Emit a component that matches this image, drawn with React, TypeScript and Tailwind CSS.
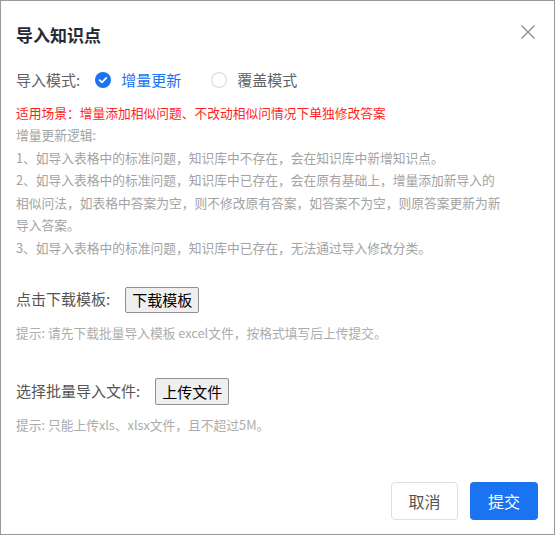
import { useState } from "react";

const LOGIC_LINES = [
  "增量更新逻辑:",
  "1、如导入表格中的标准问题，知识库中不存在，会在知识库中新增知识点。",
  "2、如导入表格中的标准问题，知识库中已存在，会在原有基础上，增量添加新导入的",
  "相似问法，如表格中答案为空，则不修改原有答案，如答案不为空，则原答案更新为新",
  "导入答案。",
  "3、如导入表格中的标准问题，知识库中已存在，无法通过导入修改分类。",
];

function CheckedRadio() {
  return (
    <svg width="16" height="16" viewBox="0 0 16 16">
      <circle cx="8" cy="8" r="8" fill="#1a73f0" />
      <path d="M4.6 8.2 L7 10.4 L11.3 5.9" fill="none" stroke="#fff" strokeWidth="1.8" strokeLinecap="round" strokeLinejoin="round" />
    </svg>
  );
}

function EmptyRadio() {
  return (
    <svg width="16" height="16" viewBox="0 0 16 16">
      <circle cx="8" cy="8" r="7.4" fill="#fff" stroke="#dcdee3" strokeWidth="1.2" />
    </svg>
  );
}

export default function App() {
  const [mode, setMode] = useState<"incr" | "cover">("incr");

  return (
    <div className="w-[555px] h-[535px] border border-[#9a9a9a] bg-white relative font-['Noto_Sans_CJK_SC',sans-serif] pt-[22px] px-[15px]">
      <button className="absolute top-[24px] right-[19px] w-[14px] h-[14px] flex items-center justify-center">
        <svg width="14" height="14" viewBox="0 0 14 14">
          <path d="M1 1 L13 13 M13 1 L1 13" stroke="#8a8e96" strokeWidth="1.4" strokeLinecap="round" />
        </svg>
      </button>

      <h1 className="text-[17px] leading-[24px] font-bold text-[#262a35]">导入知识点</h1>

      <div className="mt-[21px] h-[24px] flex items-center text-[15px] leading-[24px]">
        <span className="text-[#5f6167]">导入模式:</span>
        <label className="ml-[15px] flex items-center cursor-pointer" onClick={() => setMode("incr")}>
          {mode === "incr" ? <CheckedRadio /> : <EmptyRadio />}
          <span className={mode === "incr" ? "ml-[10px] text-[#1a73f0]" : "ml-[10px] text-[#606266]"}>增量更新</span>
        </label>
        <label className="ml-[30px] flex items-center cursor-pointer" onClick={() => setMode("cover")}>
          {mode === "cover" ? <CheckedRadio /> : <EmptyRadio />}
          <span className={mode === "cover" ? "ml-[10px] text-[#1a73f0]" : "ml-[10px] text-[#606266]"}>覆盖模式</span>
        </label>
      </div>

      <p className="mt-[10px] text-[12.75px] leading-[22px] text-[#ff1f1f] whitespace-nowrap">
        适用场景：增量添加相似问题、不改动相似问情况下单独修改答案
      </p>
      <div className="text-[12.75px] leading-[22.6px] text-[#a3a3a3]">
        {LOGIC_LINES.map((line) => (
          <p key={line} className="whitespace-nowrap">{line}</p>
        ))}
      </div>

      <div className="mt-[27px] flex items-center h-[26px]">
        <span className="text-[15px] text-[#555]">点击下载模板:</span>
        <button className="ml-[15px] h-[26px] px-[6px] bg-[#efefef] border border-[#8f8f8f] rounded-[2px] text-[15px] leading-[24px] text-black">
          下载模板
        </button>
      </div>
      <p className="mt-[10px] text-[12.75px] leading-[20px] text-[#acacac] whitespace-nowrap">
        提示: 请先下载批量导入模板 excel文件，按格式填写后上传提交。
      </p>

      <div className="mt-[35px] flex items-center h-[27px]">
        <span className="text-[15px] text-[#555]">选择批量导入文件:</span>
        <button className="ml-[15px] h-[27px] px-[6px] bg-[#efefef] border border-[#8f8f8f] rounded-[2px] text-[15px] leading-[25px] text-black">
          上传文件
        </button>
      </div>
      <p className="mt-[10px] text-[12.75px] leading-[20px] text-[#acacac] whitespace-nowrap">
        提示: 只能上传xls、xlsx文件，且不超过5M。
      </p>

      <div className="mt-[47px] pr-[1px] flex justify-end gap-[12px]">
        <button className="w-[67px] h-[38px] rounded-[4px] border border-[#dcdfe6] bg-white text-[16px] text-[#555]">
          取消
        </button>
        <button className="w-[68px] h-[38px] rounded-[4px] bg-[#1a73f0] text-[16px] text-white">
          提交
        </button>
      </div>
    </div>
  );
}
